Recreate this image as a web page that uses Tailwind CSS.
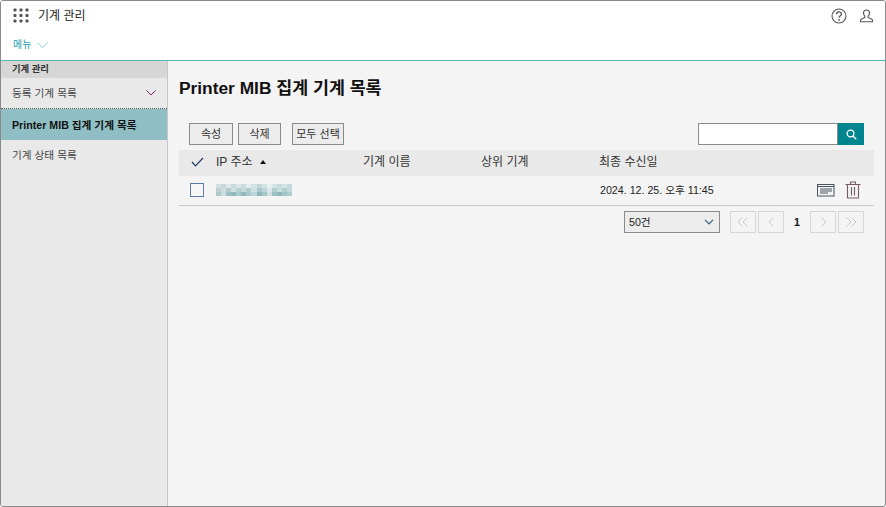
<!DOCTYPE html>
<html lang="ko">
<head>
<meta charset="utf-8">
<script src="https://cdn.jsdelivr.net/npm/@tailwindcss/browser@4"></script>
</head>
<body class="m-0 overflow-hidden">
<div class="w-[886px] h-[507px] border border-[#8a8a8a] rounded-[3px] flex flex-col bg-[#f4f4f4] text-[#222] font-['Liberation_Sans','Noto_Sans_CJK_KR',sans-serif] overflow-hidden">
  <header class="h-[60px] shrink-0 bg-white border-b border-[#4fb8bf] flex flex-col">
    <div class="h-[28px] mt-[1px] flex items-center pl-[12px] pr-[12px]">
      <svg width="16" height="15" viewBox="0 0 16 15" fill="#555" class="mt-[-1px]">
        <rect x=".5" y=".5" width="3" height="3" rx=".8"/><rect x="6.500" y=".5" width="3" height="3" rx=".8"/><rect x="12.500" y=".5" width="3" height="3" rx=".8"/>
        <rect x=".5" y="6" width="3" height="3" rx=".8"/><rect x="6.500" y="6" width="3" height="3" rx=".8"/><rect x="12.500" y="6" width="3" height="3" rx=".8"/>
        <rect x=".5" y="11.500" width="3" height="3" rx=".8"/><rect x="6.500" y="11.500" width="3" height="3" rx=".8"/><rect x="12.500" y="11.500" width="3" height="3" rx=".8"/>
      </svg>
      <span class="ml-[9px] text-[12px] text-[#222]">기계 관리</span>
      <svg class="ml-auto" width="16" height="16" viewBox="0 0 16 16" fill="none" stroke="#555" stroke-width="1.1">
        <circle cx="8" cy="8" r="7"/>
        <path d="M5.6 6.2c0-1.5 1.1-2.3 2.4-2.3s2.4.8 2.4 2.1c0 1.8-2.3 1.9-2.3 3.8" stroke-width="1.3"/>
        <circle cx="8.1" cy="11.9" r=".9" fill="#555" stroke="none"/>
      </svg>
      <svg class="ml-[13px]" width="13" height="14" viewBox="0 0 13 14" fill="none" stroke="#555" stroke-width="1.1">
        <path d="M6.5 1c-1.9 0-3 1.3-3 3.1 0 1.3.6 2.5 1.4 3.1v1.2L1.2 10.2c-.5.3-.7.7-.7 1.3v1.3h12v-1.3c0-.6-.2-1-.7-1.3L8.100 8.400V7.200c.8-.6 1.400-1.800 1.400-3.100C9.500 2.300 8.400 1 6.500 1z"/>
      </svg>
    </div>
    <div class="h-[29px] flex items-center pl-[12px] gap-[6px]">
      <span class="text-[10px] text-[#1a9bb0]">메뉴</span>
      <svg width="11" height="6" viewBox="0 0 11 6" fill="none" stroke="#8fd6e6" stroke-width="1"><path d="M.5.5l5 5 5-5"/></svg>
    </div>
  </header>
  <div class="flex flex-1 min-h-0">
    <aside class="w-[167px] shrink-0 bg-[#e9e9e9] border-r border-[#c8c8c8] flex flex-col text-[10.67px]">
      <div class="h-[17px] bg-[#d6d6d6] pl-[11px] flex items-center font-bold text-[9.33px] text-[#333]">기계 관리</div>
      <div class="h-[31px] pl-[11px] pr-[11px] flex items-center justify-between border-b border-dotted border-[#555] text-[#444]">
        <span>등록 기계 목록</span>
        <svg width="10" height="6" viewBox="0 0 10 6" fill="none" stroke="#7a2a7a" stroke-width="1"><path d="M.5.5l4.500 4.500 4.500-4.500"/></svg>
      </div>
      <div class="h-[31px] pl-[11px] flex items-center bg-[#8fbfc4] font-bold text-[#111]">Printer MIB 집계 기계 목록</div>
      <div class="h-[30px] pl-[11px] flex items-center text-[#444]">기계 상태 목록</div>
    </aside>
    <main class="flex-1 min-w-0 pl-[11px] pr-[11px]">
      <h1 class="text-[17.33px] leading-[20px] mt-[17px] font-bold text-[#111]">Printer MIB 집계 기계 목록</h1>
      <div class="mt-[25px] h-[22px] flex pl-[10px] pr-[10px] text-[11px] text-[#333]">
        <button class="w-[44px] h-[22px] border border-[#8a8a8a] bg-[#ececec] flex items-center justify-center">속성</button>
        <button class="ml-[5px] w-[43px] h-[22px] border border-[#8a8a8a] bg-[#ececec] flex items-center justify-center">삭제</button>
        <button class="ml-[11px] w-[52px] h-[22px] border border-[#8a8a8a] bg-[#ececec] flex items-center justify-center whitespace-nowrap">모두 선택</button>
        <div class="ml-auto flex">
          <div class="w-[140px] h-[22px] border border-[#8a8a8a] bg-white"></div>
          <div class="w-[26px] h-[22px] bg-[#00848d] flex items-center justify-center">
            <svg width="11" height="11" viewBox="0 0 11 11" fill="none" stroke="#fff" stroke-width="1.300"><circle cx="4.500" cy="4.500" r="3.400"/><path d="M7 7l3.200 3.200"/></svg>
          </div>
        </div>
      </div>
      <div class="mt-[5px] h-[26px] pb-[2px] bg-[#e9e9e9] flex items-center text-[12px] text-[#333]">
        <svg class="ml-[12px]" width="13" height="10" viewBox="0 0 13 10" fill="none" stroke="#1f3a5f" stroke-width="1.200"><path d="M1 5l3.500 3.800L12 1"/></svg>
        <span class="ml-[12px] w-[45px] whitespace-nowrap">IP 주소</span>
        <svg class="ml-[-1px]" width="6" height="4" viewBox="0 0 6 4" fill="#111"><path d="M3 0l3 4H0z"/></svg>
        <span class="ml-[97px] w-[118px]">기계 이름</span>
        <span class="w-[118px]">상위 기계</span>
        <span>최종 수신일</span>
      </div>
      <div class="h-[30px] pb-[2px] border-b border-[#c8c8c8] flex items-center relative">
        <span class="ml-[11px] w-[14px] h-[14px] border border-[#5a7ea8] bg-[#f7f7f7]"></span>
        <div class="ml-[12px] w-[76px] h-[12px] grid grid-cols-[repeat(15,1fr)] grid-rows-3">
          <i class="bg-[#d3dfe0]"></i><i class="bg-[#c8d8da]"></i><i class="bg-[#dde7e8]"></i><i class="bg-[#c9dadc]"></i><i class="bg-[#d9e5e6]"></i><i class="bg-[#cbdcde]"></i><i class="bg-[#e2ecec]"></i><i class="bg-[#d0e1e3]"></i><i class="bg-[#c3d7d9]"></i><i class="bg-[#d3e2e3]"></i><i class="bg-[#e6efef]"></i><i class="bg-[#d6e4e6]"></i><i class="bg-[#c8dcde]"></i><i class="bg-[#d6e4e6]"></i><i class="bg-[#c5dadc]"></i>
          <i class="bg-[#bcd0d3]"></i><i class="bg-[#cddcdd]"></i><i class="bg-[#b2cbce]"></i><i class="bg-[#d2e0e1]"></i><i class="bg-[#b4cfd2]"></i><i class="bg-[#c6dadc]"></i><i class="bg-[#b2cdd0]"></i><i class="bg-[#cfe0e1]"></i><i class="bg-[#a9c9cc]"></i><i class="bg-[#bdd5d7]"></i><i class="bg-[#dbe7e8]"></i><i class="bg-[#b2cdd0]"></i><i class="bg-[#c9dcde]"></i><i class="bg-[#b2cdd0]"></i><i class="bg-[#c3d8da]"></i>
          <i class="bg-[#b0c8cb]"></i><i class="bg-[#c9dcde]"></i><i class="bg-[#9cc0c4]"></i><i class="bg-[#8fb9bd]"></i><i class="bg-[#a9c9cc]"></i><i class="bg-[#8fb9bd]"></i><i class="bg-[#a9c9cc]"></i><i class="bg-[#bcd4d7]"></i><i class="bg-[#8fb9bd]"></i><i class="bg-[#a4c5c8]"></i><i class="bg-[#cfe0e2]"></i><i class="bg-[#9cc0c4]"></i><i class="bg-[#8fb9bd]"></i><i class="bg-[#a4c5c8]"></i><i class="bg-[#b0cdd0]"></i>
        </div>
        <span class="ml-[308px] text-[10.67px] text-[#222] whitespace-nowrap">2024. 12. 25. 오후 11:45</span>
        <div class="ml-auto mr-[13px] flex items-center gap-[10px]">
          <svg width="18" height="14" viewBox="0 0 18 14" fill="none" stroke="#4a5560" stroke-width="1"><rect x=".5" y="1.500" width="16.500" height="11.500"/><path d="M.5 3.500h16.500M3 6h12M3 8h12M3 10h8"/></svg>
          <svg width="16" height="18" viewBox="0 0 16 18" fill="none" stroke="#7a5a62" stroke-width="1.100"><path d="M.5 3.500h15M5.500 3.500V1h5v2.500M2.500 3.500V17h11V3.500M6.500 6v8.500M9.500 6v8.500"/></svg>
        </div>
      </div>
      <div class="mt-[5px] h-[22px] flex items-center">
        <div class="ml-[445px] w-[96px] h-[22px] border border-[#8a8a8a] bg-[#ececec] flex items-center justify-between pl-[4px] pr-[5px] text-[10.67px] text-[#222]">
          <span>50건</span>
          <svg width="10" height="6" viewBox="0 0 10 6" fill="none" stroke="#3a5a7a" stroke-width="1.200"><path d="M1 .8l4 4 4-4"/></svg>
        </div>
        <div class="ml-[10px] w-[26px] h-[22px] border border-[#d6d6d6] flex items-center justify-center">
          <svg width="12" height="10" viewBox="0 0 12 10" fill="none" stroke="#c8c8c8" stroke-width="1"><path d="M5.500.5L1 5l4.500 4.500M10.500.5L6 5l4.500 4.500"/></svg>
        </div>
        <div class="ml-[2px] w-[26px] h-[22px] border border-[#d6d6d6] flex items-center justify-center">
          <svg width="7" height="10" viewBox="0 0 7 10" fill="none" stroke="#c8c8c8" stroke-width="1"><path d="M5.500.5L1 5l4.500 4.500"/></svg>
        </div>
        <span class="w-[26px] text-center text-[10.67px] font-bold text-[#111]">1</span>
        <div class="w-[26px] h-[22px] border border-[#d6d6d6] flex items-center justify-center">
          <svg width="7" height="10" viewBox="0 0 7 10" fill="none" stroke="#c8c8c8" stroke-width="1"><path d="M1.500.5L6 5l-4.500 4.500"/></svg>
        </div>
        <div class="ml-[2px] w-[26px] h-[22px] border border-[#d6d6d6] flex items-center justify-center">
          <svg width="12" height="10" viewBox="0 0 12 10" fill="none" stroke="#c8c8c8" stroke-width="1"><path d="M1.500.5L6 5l-4.500 4.500M6.500.5L11 5l-4.500 4.500"/></svg>
        </div>
      </div>
    </main>
  </div>
</div>
</body>
</html>
